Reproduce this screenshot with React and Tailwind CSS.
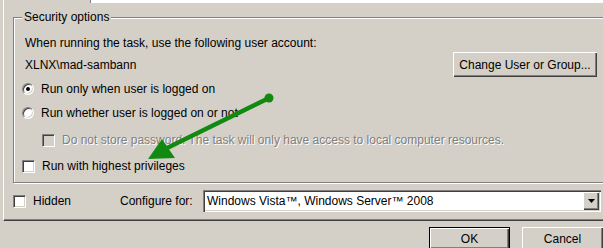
import React from "react";

function Radio({ checked }) {
  return (
    <div className="relative w-[12px] h-[12px] shrink-0 rounded-full bg-white border border-t-[#808080] border-l-[#808080] border-r-white border-b-white shadow-[inset_1px_1px_0_#404040,inset_-1px_-1px_0_#d4d0c8]">
      {checked && (
        <div className="absolute left-[3px] top-[3px] w-[4px] h-[4px] rounded-full bg-black" />
      )}
    </div>
  );
}

function Check({ disabled }) {
  return (
    <div
      className={
        "w-[13px] h-[13px] shrink-0 border border-t-[#808080] border-l-[#808080] border-r-white border-b-white shadow-[inset_1px_1px_0_#404040,inset_-1px_-1px_0_#d4d0c8] " +
        (disabled ? "bg-[#d4d0c8]" : "bg-white")
      }
    />
  );
}

const raised =
  "bg-[#d4d0c8] shadow-[inset_1px_1px_0_#ffffff,inset_-1px_-1px_0_#404040,inset_-2px_-2px_0_#808080]";

export default function App() {
  return (
    <div className="relative w-[603px] h-[248px] overflow-hidden bg-[#d4d0c8] font-['Liberation_Sans','Tahoma',sans-serif] text-[12px] leading-none text-black">
      {/* tab page */}
      <div className="ml-[3px] w-[640px] border-l border-white border-b border-b-[#404040] pb-[8px] shadow-[inset_0_-1px_0_#808080]">
        {/* bottom of the description box above */}
        <div className="ml-[86px] h-[3px] bg-white border-l border-[#808080]" />

        {/* group box */}
        <div className="relative ml-[9px] mt-[14px] w-[620px] border border-[#808080] shadow-[inset_1px_1px_0_#ffffff,1px_1px_0_#ffffff] pl-[8px] pr-[35px] pt-[17px] pb-[8px]">
          <span className="absolute -top-[8px] left-[8px] h-[14px] px-[2px] bg-[#d4d0c8] leading-[14px] whitespace-nowrap">
            Security options
          </span>

          <div className="h-[16px] flex items-center pl-[3px] whitespace-nowrap">
            When running the task, use the following user account:
          </div>

          <div className="h-[25px] mt-[1px] flex items-center justify-between pl-[3px]">
            <span className="whitespace-nowrap">XLNX\mad-sambann</span>
            <div className={"w-[144px] h-[25px] flex items-center justify-center whitespace-nowrap " + raised}>
              Change User or Group...
            </div>
          </div>

          <div className="h-[16px] mt-[4px] flex items-center gap-[7px] whitespace-nowrap">
            <Radio checked />
            <span>Run only when user is logged on</span>
          </div>

          <div className="h-[16px] mt-[8px] flex items-center gap-[7px] whitespace-nowrap">
            <Radio />
            <span>Run whether user is logged on or not</span>
          </div>

          <div className="h-[16px] mt-[11px] pl-[20px] flex items-center gap-[7px] whitespace-nowrap">
            <Check disabled />
            <span className="text-[#808080] [text-shadow:1px_1px_0_#ffffff]">
              Do not store password.  The task will only have access to local computer resources.
            </span>
          </div>

          <div className="h-[16px] mt-[10px] flex items-center gap-[7px] whitespace-nowrap">
            <Check />
            <span>Run with highest privileges</span>
          </div>
        </div>

        {/* hidden / configure row */}
        <div className="mt-[7px] h-[22px] pl-[9px] flex items-center whitespace-nowrap">
          <div className="w-[107px] flex items-center gap-[7px]">
            <Check />
            <span>Hidden</span>
          </div>
          <div className="w-[83px]">Configure for:</div>
          <div className="w-[398px] h-[22px] flex items-center bg-white shadow-[inset_1px_1px_0_#808080,inset_2px_2px_0_#404040,inset_-1px_-1px_0_#ffffff,inset_-2px_-2px_0_#d4d0c8]">
            <span className="flex-1 pl-[4px]">Windows Vista™, Windows Server™ 2008</span>
            <div className={"w-[16px] h-[18px] mr-[2px] flex items-center justify-center " + raised}>
              <svg width="7" height="4" viewBox="0 0 7 4">
                <polygon points="0,0 7,0 3.5,4" fill="#000" />
              </svg>
            </div>
          </div>
        </div>
      </div>

      {/* dialog buttons */}
      <div className="mt-[6px] ml-[429px] flex gap-[12px]">
        <div className="w-[87px] h-[23px] border border-black bg-[#d4d0c8] shadow-[inset_1px_1px_0_#ffffff,inset_-1px_-1px_0_#404040,inset_-2px_-2px_0_#808080] flex items-center justify-center">
          OK
        </div>
        <div className={"w-[87px] h-[23px] flex items-center justify-center " + raised}>
          Cancel
        </div>
      </div>

      {/* green annotation arrow */}
      <svg
        className="absolute left-0 top-0 pointer-events-none"
        width="603"
        height="248"
        viewBox="0 0 603 248"
      >
        <line x1="269" y1="98" x2="165" y2="149" stroke="#128a12" strokeWidth="4.5" strokeLinecap="round" />
        <circle cx="269" cy="98" r="4.5" fill="#128a12" />
        <polygon points="148,159 162,139 175,158" fill="#128a12" />
      </svg>
    </div>
  );
}
